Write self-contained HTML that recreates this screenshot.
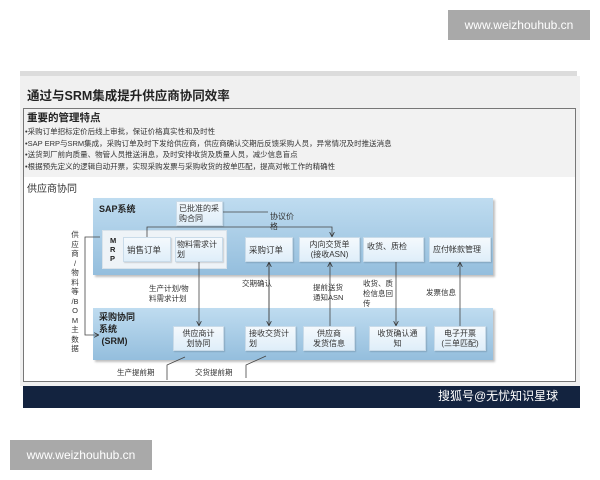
<!DOCTYPE html>
<html><head><meta charset="utf-8"><style>
*{margin:0;padding:0;box-sizing:border-box}
body{width:600px;height:480px;background:#fff;position:relative;overflow:hidden;font-family:"Liberation Sans","Noto Sans CJK SC",sans-serif;color:#222}
.a{position:absolute}
.wm{background:#a9a9a9;color:#fff;font-size:12px;text-align:center;line-height:30px}
.bx{position:absolute;background:linear-gradient(#f4f9fd,#dfeef9);border:1px solid #c9dbe9;font-size:8px;line-height:10px;padding:2px 3px;color:#333;box-shadow:1px 1px 1px rgba(0,0,0,.15);white-space:nowrap}
.band{position:absolute;background:linear-gradient(#bfdcf0,#94bedd);box-shadow:2px 2px 2px rgba(0,0,0,.25)}
.lb{position:absolute;font-size:7.5px;line-height:10px;color:#333}
</style></head><body>
<div class="a wm" style="left:448px;top:10px;width:142px;height:30px">www.weizhouhub.cn</div>
<div class="a" style="left:20px;top:71px;width:557px;height:5px;background:#dcdcdc"></div>
<div class="a" style="left:20px;top:76px;width:560px;height:310px;background:#f0f0f0"></div>
<div class="a" style="left:27px;top:85px;font-size:12.5px;font-weight:bold;color:#222">通过与SRM集成提升供应商协同效率</div>
<div class="a" style="left:23px;top:108px;width:553px;height:70px;border:1px solid #777;background:#f2f2f2"></div>
<div class="a" style="left:27px;top:110px;font-size:10.5px;font-weight:bold">重要的管理特点</div>
<div class="a" style="left:25px;top:126px;font-size:7.5px;line-height:11.5px;color:#333;white-space:nowrap">•采购订单招标定价后线上审批，保证价格真实性和及时性<br>•SAP ERP与SRM集成，采购订单及时下发给供应商，供应商确认交期后反馈采购人员，异常情况及时推送消息<br>•送货到厂前向质量、物管人员推送消息，及时安排收货及质量人员，减少信息盲点<br>•根据预先定义的逻辑自动开票，实现采购发票与采购收货的按单匹配，提高对帐工作的精确性</div>
<div class="a" style="left:23px;top:177px;width:553px;height:205px;border:1px solid #777;border-top:none;background:#fff"></div>
<div class="a" style="left:27px;top:180px;font-size:10px;color:#333">供应商协同</div>
<div class="band" style="left:93px;top:198px;width:400px;height:77px"></div>
<div class="band" style="left:93px;top:308px;width:400px;height:52px"></div>
<div class="a" style="left:99px;top:202px;font-size:9px;font-weight:bold">SAP系统</div>
<div class="a" style="left:99px;top:311px;font-size:9px;font-weight:bold;line-height:12px">采购协同<br>系统<br>&nbsp;(SRM)</div>
<div class="a" style="left:102px;top:230px;width:125px;height:39px;background:#eef3f7;border:1px solid #d8e2ea"></div>
<div class="a" style="left:110px;top:236px;font-size:7.5px;font-weight:bold;line-height:9px">M<br>R<br>P</div>
<div class="bx" style="left:176px;top:201px;width:47px;height:25px;padding:2px 2px">已批准的采<br>购合同</div>
<div class="bx" style="left:123px;top:237px;width:48px;height:25px;font-size:8.5px;line-height:20px">销售订单</div>
<div class="bx" style="left:175px;top:237px;width:48px;height:25px;padding:2px 1px">物料需求计<br>划</div>
<div class="bx" style="left:245px;top:237px;width:48px;height:25px;font-size:8.5px;line-height:20px">采购订单</div>
<div class="bx" style="left:299px;top:237px;width:61px;height:25px;text-align:center">内向交货单<br>(接收ASN)</div>
<div class="bx" style="left:363px;top:237px;width:61px;height:25px;line-height:14px">收货、质检</div>
<div class="bx" style="left:429px;top:237px;width:62px;height:25px;line-height:20px">应付帐款管理</div>
<div class="bx" style="left:173px;top:326px;width:51px;height:25px;text-align:center">供应商计<br>划协同</div>
<div class="bx" style="left:245px;top:326px;width:51px;height:25px">接收交货计<br>划</div>
<div class="bx" style="left:303px;top:326px;width:52px;height:25px;text-align:center">供应商<br>发货信息</div>
<div class="bx" style="left:369px;top:326px;width:57px;height:25px;text-align:center">收货确认通<br>知</div>
<div class="bx" style="left:434px;top:326px;width:52px;height:25px;text-align:center">电子开票<br>(三单匹配)</div>
<div class="lb" style="left:270px;top:212px;font-size:8px">协议价<br>格</div>
<div class="lb" style="left:70px;top:230px;font-size:7.5px;line-height:9.5px;width:10px;text-align:center">供<br>应<br>商<br>/<br>物<br>料<br>等<br>/B<br>O<br>M<br>主<br>数<br>据</div>
<div class="lb" style="left:149px;top:284px">生产计划/物<br>料需求计划</div>
<div class="lb" style="left:242px;top:279px">交期确认</div>
<div class="lb" style="left:313px;top:283px">提前送货<br>通知ASN</div>
<div class="lb" style="left:363px;top:279px">收货、质<br>检信息回<br>传</div>
<div class="lb" style="left:426px;top:288px">发票信息</div>
<div class="lb" style="left:117px;top:368px">生产提前期</div>
<div class="lb" style="left:195px;top:368px">交货提前期</div>
<svg class="a" style="left:0;top:0" width="600" height="480" viewBox="0 0 600 480">
<defs><marker id="m" markerWidth="6" markerHeight="6" refX="5" refY="3" orient="auto"><path d="M0,0 L6,3 L0,6" fill="none" stroke="#333" stroke-width="1"/></marker></defs>
<g stroke="#444" stroke-width="0.8" fill="none">
<path d="M147,237 V227 H332 V236" marker-end="url(#m)"/>
<path d="M223,212 H268"/>
<path d="M100,237 H85 V335 H98" marker-end="url(#m)"/>
<path d="M199,262 V325" marker-end="url(#m)"/>
<path d="M269,263 V325" marker-end="url(#m)"/>
<path d="M269,325 V263" marker-end="url(#m)"/>
<path d="M330,326 V263" marker-end="url(#m)"/>
<path d="M396,262 V325" marker-end="url(#m)"/>
<path d="M460,326 V263" marker-end="url(#m)"/>
<path d="M167,380 V365 L185,357"/>
<path d="M246,378 V365 L266,356"/>
</g></svg>
<div class="a" style="left:23px;top:386px;width:557px;height:22px;background:#13233f"></div>
<div class="a" style="left:438px;top:387px;font-size:12px;color:#fff;white-space:nowrap">搜狐号@无忧知识星球</div>
<div class="a wm" style="left:10px;top:440px;width:142px;height:30px">www.weizhouhub.cn</div>
</body></html>
